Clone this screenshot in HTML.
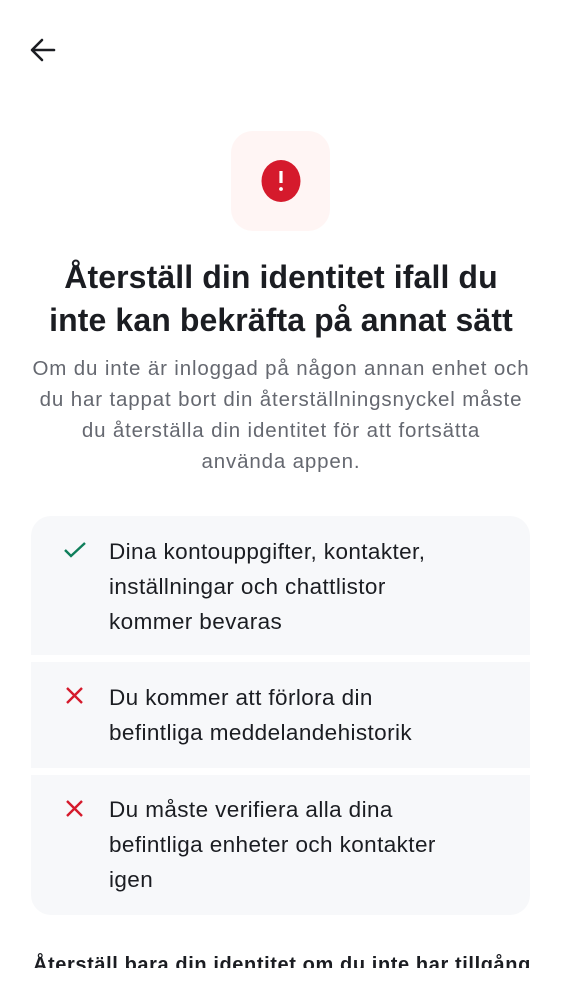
<!DOCTYPE html>
<html><head><meta charset="utf-8"><style>
*{margin:0;padding:0;box-sizing:border-box}
body{width:562px;height:1000px;background:#fff;font-family:"Liberation Sans",sans-serif;position:relative;overflow:hidden;color:#1b1d22}
.abs{position:absolute}
h1{position:absolute;left:0;width:562px;top:256px;text-align:center;font-size:32px;line-height:43px;font-weight:bold;letter-spacing:0.1px;white-space:nowrap}
.sub{position:absolute;left:0;width:562px;top:353px;text-align:center;font-size:20.5px;line-height:31px;color:#656870;letter-spacing:0.85px;white-space:nowrap}
.card{position:absolute;left:31px;width:499px;background:#f7f8fa}
.txt{position:absolute;left:78px;font-size:22.5px;line-height:35px;color:#1b1d22;letter-spacing:0.4px;white-space:nowrap}
.ic{position:absolute;left:32px}
</style></head><body>
<svg class="abs" style="left:30px;top:38px" width="26" height="24" viewBox="0 0 26 24"><path d="M24 12H3M12 2L2 12l10 10" fill="none" stroke="#1b1d22" stroke-width="2.6" stroke-linecap="round" stroke-linejoin="round"/></svg>
<div class="abs" style="left:231px;top:131px;width:99px;height:100px;border-radius:22px;background:#fff5f4"></div>
<svg class="abs" style="left:260px;top:160px" width="42" height="42" viewBox="0 0 42 42"><ellipse cx="21" cy="21" rx="19.5" ry="21" fill="#d51a2c"/><rect x="19.4" y="11" width="3.2" height="12" fill="#fff"/><circle cx="21" cy="29" r="1.9" fill="#fff"/></svg>
<h1>Återställ din identitet ifall du<br>inte kan bekräfta på annat sätt</h1>
<div class="sub">Om du inte är inloggad på någon annan enhet och<br>du har tappat bort din återställningsnyckel måste<br>du återställa din identitet för att fortsätta<br>använda appen.</div>
<div class="card" style="top:516px;height:139px;border-radius:20px 20px 0 0">
<svg class="ic" style="top:24px" width="24" height="20" viewBox="0 0 24 20"><path d="M2 10l6 6L22 3" fill="none" stroke="#0f7f5b" stroke-width="2.4"/></svg>
<div class="txt" style="top:18px">Dina kontouppgifter, kontakter,<br>inställningar och chattlistor<br>kommer bevaras</div></div>
<div class="card" style="top:662px;height:106px">
<svg class="ic" style="top:24px" width="24" height="20" viewBox="0 0 24 20"><path d="M4 2l15 15M19 2L4 17" fill="none" stroke="#d51a2c" stroke-width="2.4"/></svg>
<div class="txt" style="top:18px">Du kommer att förlora din<br>befintliga meddelandehistorik</div></div>
<div class="card" style="top:775px;height:140px;border-radius:0 0 20px 20px">
<svg class="ic" style="top:24px" width="24" height="20" viewBox="0 0 24 20"><path d="M4 2l15 15M19 2L4 17" fill="none" stroke="#d51a2c" stroke-width="2.4"/></svg>
<div class="txt" style="top:17px">Du måste verifiera alla dina<br>befintliga enheter och kontakter<br>igen</div></div>
<div class="abs" style="left:33px;top:950px;width:500px;height:18px;overflow:hidden"><div style="font-size:20px;line-height:30px;font-weight:bold;white-space:nowrap;letter-spacing:0.6px">Återställ bara din identitet om du inte har tillgång</div></div>
</body></html>
